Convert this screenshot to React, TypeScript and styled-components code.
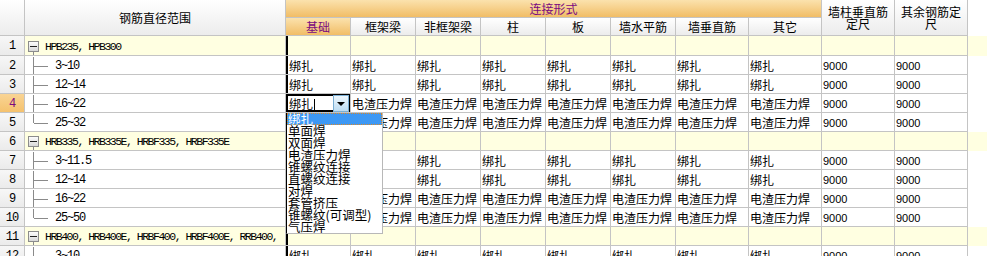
import styled, { createGlobalStyle, css } from "styled-components";

const GlobalStyle = createGlobalStyle`
  html, body { margin: 0; padding: 0; background: #ffffff; }
  body { font-family: "Noto Sans CJK SC", sans-serif; font-size: 12px; color: #000; }
`;

const COLS = "25px 261px repeat(6, 65px) repeat(4, 73px)";
const GRID_LINE = "#c4c4c4";
const PURPLE = "#7a0a80";
const CJK = `"Noto Sans CJK SC", "Liberation Sans", sans-serif`;
const MONO = `"Liberation Mono", "Noto Sans CJK SC", monospace`;

const Sheet = styled.div`
  position: relative;
  width: 987px;
  height: 256px;
  overflow: hidden;
  background: #fff;
`;

const Header = styled.div`
  display: grid;
  grid-template-columns: ${COLS};
  grid-template-rows: 18px 18px;
`;

const HeadCell = styled.div<{ $tone?: "plain" | "orange"; $wrap?: boolean; $col: string; $row: string }>`
  grid-column: ${(p) => p.$col};
  grid-row: ${(p) => p.$row};
  box-sizing: border-box;
  border-right: 1px solid ${GRID_LINE};
  border-bottom: 1px solid ${GRID_LINE};
  display: flex;
  align-items: center;
  justify-content: center;
  text-align: center;
  font-family: ${CJK};
  font-size: 12px;
  line-height: 12px;
  white-space: ${(p) => (p.$wrap ? "normal" : "nowrap")};
  padding: ${(p) => (p.$wrap ? "0 5px" : "0")};
  background: linear-gradient(#ffffff, #ececec);
  ${(p) =>
    p.$tone === "orange" &&
    css`
      background: linear-gradient(#fbe2ad, #f1bd66);
      color: ${PURPLE};
    `}
`;

const Row = styled.div<{ $h?: number; $group?: boolean }>`
  display: grid;
  grid-template-columns: ${COLS};
  height: ${(p) => p.$h ?? 19}px;
  background: ${(p) => (p.$group ? "#ffffe1" : "#ffffff")};
`;

const NumCell = styled.div<{ $active?: boolean }>`
  box-sizing: border-box;
  border-right: 1px solid ${GRID_LINE};
  border-bottom: 1px solid ${GRID_LINE};
  display: flex;
  align-items: center;
  justify-content: center;
  font-family: ${MONO};
  font-size: 12px;
  letter-spacing: -1px;
  padding-top: 1px;
  background: ${(p) => (p.$active ? "linear-gradient(#f9d494, #f5c26e)" : "linear-gradient(#f7f7f7, #ebebeb)")};
  color: ${(p) => (p.$active ? PURPLE : "#000")};
`;

const TreeCell = styled.div`
  position: relative;
  box-sizing: border-box;
  border-right: 1px solid ${GRID_LINE};
  border-bottom: 1px solid ${GRID_LINE};
  display: flex;
  align-items: center;
  font-family: ${MONO};
  font-size: 12px;
  letter-spacing: -1.2px;
  white-space: nowrap;
  overflow: hidden;
  padding-top: 1px;
`;

const GroupName = styled.span`
  font-size: 11.5px;
  letter-spacing: -1.5px;
`;

const MinusBox = styled.span`
  position: relative;
  box-sizing: border-box;
  width: 11px;
  height: 11px;
  margin-left: 3px;
  margin-right: 6px;
  border: 1px solid #8c8c8c;
  background: linear-gradient(#fcfcfc, #d8d8d8);
  display: flex;
  align-items: center;
  justify-content: center;
  &::before {
    content: "";
    width: 7px;
    height: 1px;
    background: #222;
  }
  &::after {
    content: "";
    position: absolute;
    left: 4px;
    top: 10px;
    width: 1px;
    height: 10px;
    background: #8a8a8a;
  }
`;

const Branch = styled.span<{ $last?: boolean }>`
  position: relative;
  align-self: stretch;
  width: 30px;
  flex: none;
  &::before {
    content: "";
    position: absolute;
    left: 8px;
    top: 0;
    width: 1px;
    height: ${(p) => (p.$last ? "50%" : "100%")};
    background: #8a8a8a;
  }
  &::after {
    content: "";
    position: absolute;
    left: 9px;
    top: 50%;
    width: 14px;
    height: 1px;
    background: #8a8a8a;
  }
`;

const ValueCell = styled.div<{ $num?: boolean; $lead?: boolean }>`
  box-sizing: border-box;
  border-right: 1px solid ${GRID_LINE};
  border-bottom: 1px solid ${GRID_LINE};
  display: flex;
  align-items: center;
  padding-left: ${(p) => (p.$lead ? 3 : 1)}px;
  padding-top: 1px;
  white-space: nowrap;
  overflow: hidden;
  font-family: ${(p) => (p.$num ? `"Liberation Sans", sans-serif` : CJK)};
  font-size: ${(p) => (p.$num ? 11 : 12)}px;
  ${(p) =>
    p.$lead &&
    css`
      box-shadow: inset 2px 0 0 #000;
    `}
`;

const EditCell = styled.div`
  position: relative;
  box-sizing: border-box;
  border-right: 1px solid ${GRID_LINE};
  border-bottom: 1px solid ${GRID_LINE};
  box-shadow: inset 0 0 0 2px #000;
  display: flex;
  align-items: center;
  justify-content: space-between;
  padding: 0 1px 0 3px;
  font-family: ${CJK};
  font-size: 12px;
`;

const Caret = styled.span`
  display: inline-block;
  width: 1px;
  height: 12px;
  background: #000;
  margin-left: 1px;
  vertical-align: -2px;
`;

const ComboButton = styled.span`
  box-sizing: border-box;
  width: 16px;
  height: 17px;
  border: 1px solid #7aaed3;
  background: linear-gradient(#eef7fd, #bcdcf2);
  display: flex;
  align-items: center;
  justify-content: center;
  &::before {
    content: "";
    border-left: 4px solid transparent;
    border-right: 4px solid transparent;
    border-top: 4px solid #000;
    margin-top: 1px;
  }
`;

const DropList = styled.ul`
  position: absolute;
  left: 286px;
  top: 113px;
  width: 97px;
  margin: 0;
  padding: 0;
  list-style: none;
  box-sizing: border-box;
  background: #fff;
  border-left: 1px solid #000;
  border-right: 1px solid #b8b8b8;
  border-bottom: 1px solid #b8b8b8;
  font-family: ${CJK};
  font-size: 12.5px;
  line-height: 12px;
`;

const DropItem = styled.li<{ $selected?: boolean }>`
  height: 12px;
  padding-left: 1px;
  white-space: nowrap;
  ${(p) =>
    p.$selected &&
    css`
      box-sizing: border-box;
      height: 12px;
      background: #3d98f4;
      color: #fff;
      border: 1px dotted #d9882a;
      line-height: 10px;
      padding-left: 0;
    `}
`;

type Child = { label: string; kind: "bind" | "weld"; last?: boolean };
type Group = { n: number; name: string; kids: Child[] };

const groups: Group[] = [
  {
    n: 1,
    name: "HPB235, HPB300",
    kids: [
      { label: "3~10", kind: "bind" },
      { label: "12~14", kind: "bind" },
      { label: "16~22", kind: "weld" },
      { label: "25~32", kind: "weld", last: true },
    ],
  },
  {
    n: 6,
    name: "HRB335, HRB335E, HRBF335, HRBF335E",
    kids: [
      { label: "3~11.5", kind: "bind" },
      { label: "12~14", kind: "bind" },
      { label: "16~22", kind: "weld" },
      { label: "25~50", kind: "weld", last: true },
    ],
  },
  {
    n: 11,
    name: "HRB400, HRB400E, HRBF400, HRBF400E, RRB400,",
    kids: [{ label: "3~10", kind: "bind" }],
  },
];

const subHeads = ["框架梁", "非框架梁", "柱", "板", "墙水平筋", "墙垂直筋", "其它"];
const options = ["绑扎", "单面焊", "双面焊", "电渣压力焊", "锥螺纹连接", "直螺纹连接", "对焊", "套管挤压", "锥螺纹(可调型)", "气压焊"];

const EDIT_ROW = 4;

export default function App() {
  const rows: JSX.Element[] = [];
  for (const g of groups) {
    rows.push(
      <Row key={`g${g.n}`} $group $h={g.n === 1 ? 20 : 19}>
        <NumCell>{g.n}</NumCell>
        <TreeCell>
          <MinusBox />
          <GroupName>{g.name}</GroupName>
        </TreeCell>
        {Array.from({ length: 10 }, (_, i) => (
          <ValueCell key={i} $lead={i === 0} />
        ))}
      </Row>
    );
    g.kids.forEach((k, idx) => {
      const n = g.n + idx + 1;
      const text = k.kind === "bind" ? "绑扎" : "电渣压力焊";
      rows.push(
        <Row key={`r${n}`}>
          <NumCell $active={n === EDIT_ROW}>{n}</NumCell>
          <TreeCell>
            <Branch $last={k.last} />
            {k.label}
          </TreeCell>
          {n === EDIT_ROW ? (
            <EditCell>
              <span>
                绑扎
                <Caret />
              </span>
              <ComboButton />
            </EditCell>
          ) : (
            <ValueCell $lead>{text}</ValueCell>
          )}
          {subHeads.map((h) => (
            <ValueCell key={h}>{text}</ValueCell>
          ))}
          <ValueCell $num>9000</ValueCell>
          <ValueCell $num>9000</ValueCell>
        </Row>
      );
    });
  }

  return (
    <>
      <GlobalStyle />
      <Sheet>
        <Header>
          <HeadCell $col="1" $row="1 / 3" />
          <HeadCell $col="2" $row="1 / 3">
            钢筋直径范围
          </HeadCell>
          <HeadCell $tone="orange" $col="3 / 11" $row="1">
            连接形式
          </HeadCell>
          <HeadCell $wrap $col="11" $row="1 / 3">
            墙柱垂直筋定尺
          </HeadCell>
          <HeadCell $wrap $col="12" $row="1 / 3">
            其余钢筋定尺
          </HeadCell>
          <HeadCell $tone="orange" $col="3" $row="2">
            基础
          </HeadCell>
          {subHeads.map((h, i) => (
            <HeadCell key={h} $col={String(4 + i)} $row="2">
              {h}
            </HeadCell>
          ))}
        </Header>
        {rows}
        <DropList>
          {options.map((o, i) => (
            <DropItem key={o} $selected={i === 0}>
              {o}
            </DropItem>
          ))}
        </DropList>
      </Sheet>
    </>
  );
}
